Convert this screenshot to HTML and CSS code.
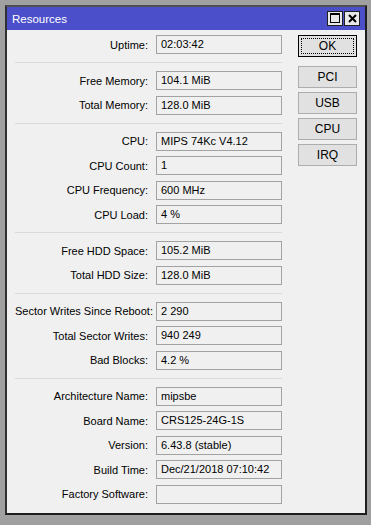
FILE: index.html
```html
<!DOCTYPE html>
<html lang="en">
<head>
    <meta charset="UTF-8">
    <title>Resources</title>
    <link rel="stylesheet" href="styles.css">
</head>
<body>
    <div class="window">
        <div class="titlebar">
            <span class="title">Resources</span>
            <div class="controls">
                <span class="ctl">
                    <svg width="10" height="10" viewBox="0 0 10 10"><rect x="0.5" y="0.5" width="9" height="9" fill="none" stroke="#000" stroke-width="1"/><line x1="0" y1="1.5" x2="10" y2="1.5" stroke="#000" stroke-width="1"/></svg>
                </span>
                <span class="ctl">
                    <svg width="9" height="9" viewBox="0 0 9 9"><path d="M1 1 L8 8 M8 1 L1 8" stroke="#000" stroke-width="2"/></svg>
                </span>
            </div>
        </div>
        <div class="content">
            <div class="fields">
                <div class="row"><label>Uptime:</label><div class="box">02:03:42</div></div>
                <div class="sep"></div>
                <div class="row"><label>Free Memory:</label><div class="box">104.1 MiB</div></div>
                <div class="row"><label>Total Memory:</label><div class="box">128.0 MiB</div></div>
                <div class="sep"></div>
                <div class="row"><label>CPU:</label><div class="box">MIPS 74Kc V4.12</div></div>
                <div class="row"><label>CPU Count:</label><div class="box">1</div></div>
                <div class="row"><label>CPU Frequency:</label><div class="box">600 MHz</div></div>
                <div class="row"><label>CPU Load:</label><div class="box">4 %</div></div>
                <div class="sep"></div>
                <div class="row"><label>Free HDD Space:</label><div class="box">105.2 MiB</div></div>
                <div class="row"><label>Total HDD Size:</label><div class="box">128.0 MiB</div></div>
                <div class="sep"></div>
                <div class="row"><label>Sector Writes Since Reboot:</label><div class="box">2 290</div></div>
                <div class="row"><label>Total Sector Writes:</label><div class="box">940 249</div></div>
                <div class="row"><label>Bad Blocks:</label><div class="box">4.2 %</div></div>
                <div class="sep"></div>
                <div class="row"><label>Architecture Name:</label><div class="box">mipsbe</div></div>
                <div class="row"><label>Board Name:</label><div class="box">CRS125-24G-1S</div></div>
                <div class="row"><label>Version:</label><div class="box">6.43.8 (stable)</div></div>
                <div class="row"><label>Build Time:</label><div class="box">Dec/21/2018 07:10:42</div></div>
                <div class="row"><label>Factory Software:</label><div class="box"></div></div>
            </div>
            <div class="buttons">
                <button class="btn ok"><span>OK</span></button>
                <button class="btn first">PCI</button>
                <button class="btn">USB</button>
                <button class="btn">CPU</button>
                <button class="btn">IRQ</button>
            </div>
        </div>
    </div>
</body>
</html>
```

FILE: styles.css
```css
body{
    margin: 0;
    background: #a0a0a0;
    font-family: 'Liberation Sans', Arial, sans-serif;
    font-size: 11px;
    color: #000;
}
.window{
    margin: 5px 0 0 5px;
    width: 358px;
    height: 506px;
    border: 2px solid #1e1e1e;
    border-top-color: #505050;
    border-left-color: #303030;
    background: #f0f0f0;
    display: flex;
    flex-direction: column;
}
.titlebar{
    height: 23px;
    background: #4b4fc9;
    display: flex;
    align-items: center;
    justify-content: space-between;
    padding: 0 5px 0 5px;
}
.title{
    color: #fff;
    font-size: 11.5px;
}
.controls{
    display: flex;
    gap: 1px;
    margin-top: -1px;
}
.ctl{
    width: 14px;
    height: 13px;
    background: #e8e8e8;
    border: 1px solid #202020;
    display: flex;
    align-items: center;
    justify-content: center;
}
.content{
    display: flex;
    padding: 5px 8px 0 8px;
}
.fields{
    width: 267px;
    display: flex;
    flex-direction: column;
}
.row{
    display: flex;
    align-items: center;
    height: 19px;
    margin-bottom: 5.5px;
}
.row label{
    width: 133px;
    text-align: right;
    margin-right: 8px;
    white-space: nowrap;
}
.box{
    width: 124px;
    height: 17px;
    line-height: 17px;
    border: 1px solid #a2a2a2;
    background: #f0f0f0;
    text-indent: 4px;
}
.sep{
    height: 1px;
    background: #dadada;
    margin: 2.5px 0 8px 0;
}
.buttons{
    margin-left: 16px;
    display: flex;
    flex-direction: column;
}
.btn{
    width: 59px;
    height: 22px;
    margin-bottom: 4px;
    background: #e1e1e1;
    border: 1px solid #adadad;
    font-family: 'Liberation Sans', Arial, sans-serif;
    font-size: 12px;
    color: #000;
    padding: 0;
}
.btn.ok{
    border: 1px solid #000;
    padding: 2px;
    margin-bottom: 9px;
}
.btn.ok span{
    display: flex;
    height: 100%;
    align-items: center;
    justify-content: center;
    border: 1px dotted #000;
    box-sizing: border-box;
}
```
